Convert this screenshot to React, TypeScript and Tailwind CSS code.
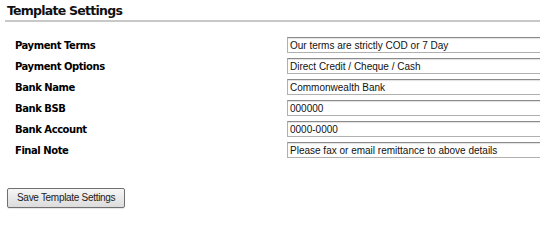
import React from 'react';

const FIELDS = [
  { label: 'Payment Terms', value: 'Our terms are strictly COD or 7 Day' },
  { label: 'Payment Options', value: 'Direct Credit / Cheque / Cash' },
  { label: 'Bank Name', value: 'Commonwealth Bank' },
  { label: 'Bank BSB', value: '000000' },
  { label: 'Bank Account', value: '0000-0000' },
  { label: 'Final Note', value: 'Please fax or email remittance to above details' },
];

export default function App() {
  return (
    <div className="w-[540px] h-[225px] overflow-hidden bg-white">
      {/* Heading */}
      <div className="pl-[5px] pt-[2px]">
        <h2 className="pl-[2px] text-[12.5px] leading-[18px] font-bold text-[#111] font-['DejaVu_Sans',sans-serif] tracking-[-0.75px]">
          Template Settings
        </h2>
        <div className="h-[2px] bg-[#c8c8c8]" />
      </div>

      {/* Fields */}
      <div className="flex flex-col gap-[5px] mt-[15px]">
        {FIELDS.map((f, i) => (
          <div key={i} className="flex items-center h-[16px]">
            <label className="w-[287px] shrink-0 pl-[15px] text-[10px] font-bold text-black font-['DejaVu_Sans',sans-serif] tracking-[-0.45px]">
              {f.label}
            </label>
            <input
              readOnly
              value={f.value}
              className="w-[300px] shrink-0 h-[16px] px-[2px] border border-[#b0b0b0] border-t-[#8a8a8a] shadow-[inset_0_1px_1px_rgba(0,0,0,0.12)] text-[10px] text-[#111] font-['Liberation_Sans',Arial,sans-serif] outline-none"
            />
          </div>
        ))}
      </div>

      {/* Button */}
      <div className="pl-[7px] mt-[25px]">
        <button className="h-[20px] px-[9px] border border-[#707070] rounded-[2px] bg-gradient-to-b from-[#f6f6f6] to-[#dcdcdc] text-[10px] tracking-[-0.3px] text-[#222] font-['Liberation_Sans',Arial,sans-serif] shadow-[0_1px_1px_rgba(0,0,0,0.1)]">
          Save Template Settings
        </button>
      </div>
    </div>
  );
}
